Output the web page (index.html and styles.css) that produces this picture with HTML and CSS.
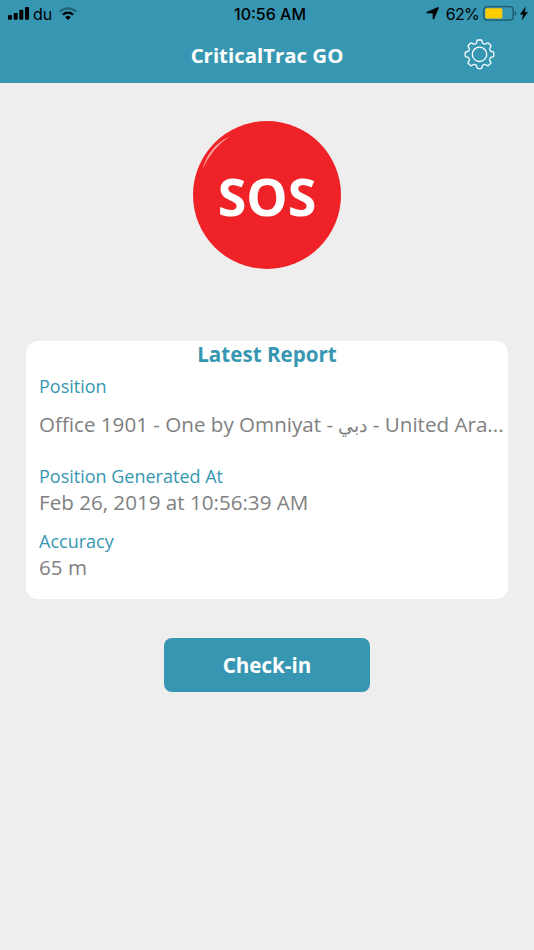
FILE: index.html
```
<!DOCTYPE html>
<html lang="en">
<head>
  <meta charset="UTF-8">
  <meta name="viewport" content="width=device-width, initial-scale=1.0">
  <title>CriticalTrac GO</title>
  <link rel="stylesheet" href="styles.css">
</head>
<body>
  <header class="header">
    <!-- Status bar -->
    <div class="status-bar">
      <div class="status-left">
        <svg class="signal" width="22" height="14" viewBox="0 0 22 14">
          <rect x="0" y="8" width="4" height="4.7" rx="1"/>
          <rect x="5.7" y="6" width="4" height="6.7" rx="1"/>
          <rect x="11.3" y="2.8" width="4" height="9.9" rx="1"/>
          <rect x="17" y="0" width="4" height="12.7" rx="1"/>
        </svg>
        <span class="carrier">du</span>
        <svg class="wifi" width="18" height="13" viewBox="0 0 18 13" fill="none" stroke="#000" stroke-width="2.3">
          <path d="M1 4.7A11.5 11.5 0 0 1 17 4.7" opacity=".35"/>
          <path d="M3.9 7.8A7.3 7.3 0 0 1 14.1 7.8"/>
          <path d="M9 13L6.2 10.2A4 4 0 0 1 11.8 10.2Z" fill="#000" stroke="none"/>
        </svg>
      </div>
      <div class="clock">10:56 AM</div>
      <div class="status-right">
        <svg width="13" height="13" viewBox="0 0 13 13" stroke="#000" stroke-width=".8"><path d="M12 .5Q12.6.4 12.4 1L7.7 12Q7.3 12.6 7.1 12V6.5Q7.1 5.9 6.6 5.9H1Q.3 5.7.9 5.3Z"/></svg>
        <span class="percent">62%</span>
        <svg class="battery" width="34" height="15" viewBox="0 0 34 15">
          <rect x=".7" y=".7" width="29.4" height="13.4" rx="3.4" fill="none" stroke="#1d5768" stroke-width="1.3"/>
          <rect x="2.3" y="2.3" width="17" height="10.2" rx="1.5" fill="#fc0"/>
          <path d="M31.6 4.8Q33.4 5.5 33.4 7.4T31.6 10Z" fill="#1d5768"/>
        </svg>
        <svg class="bolt" width="8" height="13" viewBox="0 0 8 13" stroke="#000" stroke-width=".4"><path d="M5.5 .3L.2 7.3H3.3L2 12.7L7.7 5.2H4.5Z"/></svg>
      </div>
    </div>

    <!-- Title bar -->
    <div class="nav-bar">
      <h1 class="title">CriticalTrac GO</h1>
      <svg class="settings" width="32" height="32" viewBox="-16.5 -16.3 32 32" fill="none" stroke="#fff" stroke-width="1.3">
        <defs>
          <path id="tooth" d="M-4.3-10.4Q-3-10.9-2.8-12L-2.5-13.4Q-2.3-14.3-1.4-14.3H1.4Q2.3-14.3 2.5-13.4L2.8-12Q3-10.9 4.3-10.4"/>
        </defs>
        <use href="#tooth"/>
        <use href="#tooth" transform="rotate(45)"/>
        <use href="#tooth" transform="rotate(90)"/>
        <use href="#tooth" transform="rotate(135)"/>
        <use href="#tooth" transform="rotate(180)"/>
        <use href="#tooth" transform="rotate(225)"/>
        <use href="#tooth" transform="rotate(270)"/>
        <use href="#tooth" transform="rotate(315)"/>
        <circle r="7.2"/>
      </svg>
    </div>
  </header>

  <main class="content">
    <button class="sos">
      <svg class="shine" width="30" height="36" viewBox="0 0 30 36"><path d="M1.5 34Q8 11 28.5 1.5Q11 13 1.5 34Z" fill="#f8a5a5"/></svg>
      SOS
    </button>

    <!-- Latest report -->
    <section class="card">
      <h2 class="card-title">Latest Report</h2>
      <div class="label">Position</div>
      <div class="value address">Office 1901 - One by Omniyat - <span class="arabic">دبي</span> - United Ara...</div>
      <div class="label">Position Generated At</div>
      <div class="value date">Feb 26, 2019 at 10:56:39 AM</div>
      <div class="label">Accuracy</div>
      <div class="value">65 m</div>
    </section>

    <button class="check-in">Check-in</button>
  </main>
</body>
</html>
```

FILE: styles.css
```
* {
  box-sizing: border-box;
}

body {
  margin: 0;
  min-height: 950px;
  background-color: #eee;
  font-family: "Open Sans", "Noto Sans", sans-serif;
}

h1, h2 {
  margin: 0;
}

svg {
  display: block;
}

button {
  border: none;
  padding: 0;
  font-family: inherit;
  font-weight: bold;
  color: #fff;
}

/* Header */
.header {
  height: 83px;
  background-color: #3797b2;
}

.status-bar {
  display: grid;
  grid-template-columns: 1fr auto 1fr;
  align-items: center;
  height: 27px;
  padding: 0 6px 0 8px;
  font-family: Inter, sans-serif;
  font-size: 16px;
  color: #000;
}

.status-left, .status-right {
  display: flex;
  align-items: center;
}

.status-right {
  justify-content: flex-end;
}

.carrier {
  margin: 0 7px 0 3px;
}

.clock {
  padding-left: 4px;
  font-weight: 500;
}

.percent {
  margin: 0 4px 0 7px;
  font-size: 16px;
  letter-spacing: -0.7px;
}

.bolt {
  margin-left: 3px;
}

.nav-bar {
  display: grid;
  grid-template-columns: 1fr auto 1fr;
  align-items: center;
  height: 56px;
}

.title {
  grid-column: 2;
  font-size: 20.4px;
  line-height: 28px;
  color: #fff;
}

.settings {
  justify-self: end;
  margin: 0 39px 2px 0;
}

/* Content */
.content {
  display: flex;
  flex-direction: column;
  align-items: center;
}

.sos {
  position: relative;
  width: 148px;
  height: 148px;
  margin-top: 38.4px;
  border-radius: 50%;
  background-color: #ef2327;
  font-size: 52px;
}

.shine {
  position: absolute;
  left: 8px;
  top: 14px;
}

.card {
  width: 482px;
  height: 258px;
  margin-top: 71.6px;
  padding: 0 0 0 13px;
  border-radius: 12px;
  background-color: #fff;
  white-space: nowrap;
}

.card-title {
  margin-right: 13px;
  font-size: 20.6px;
  line-height: 26px;
  text-align: center;
  color: #3797b2;
}

.label {
  padding-top: 7px;
  font-size: 18px;
  line-height: 25px;
  color: #3797b2;
}

.value {
  font-size: 20.6px;
  line-height: 27px;
  color: #808080;
}

.arabic {
  font-size: 19px;
}

.address {
  height: 58px;
  padding-top: 12px;
}

.date {
  margin-bottom: 6px;
}

.check-in {
  width: 206px;
  height: 54px;
  margin-top: 39px;
  border-radius: 8px;
  background-color: #3797b2;
  font-size: 20.6px;
}
```
